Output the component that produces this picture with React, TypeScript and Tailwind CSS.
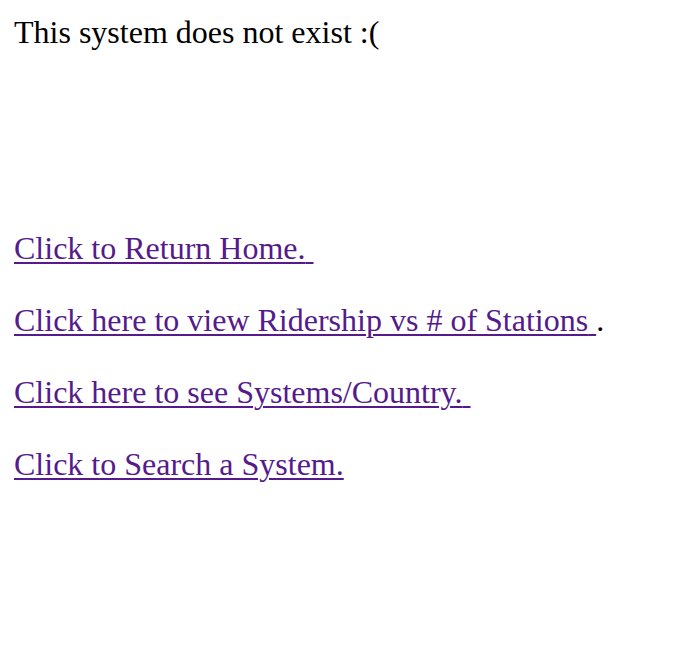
export default function App() {
  const link = "text-[#551A8B] underline decoration-[#551A8B] decoration-[2px] underline-offset-[3px]";
  return (
    <div className="min-h-[650px] bg-white p-[14px] text-black font-['Liberation_Serif','Times_New_Roman',serif] text-[32px] leading-[36px]">
      <div>This system does not exist :(</div>
      <div className="mt-[180px] flex flex-col gap-[36px]">
        <div>
          <a href="#" className={link}>Click to Return Home.{"\u00a0"}</a>
        </div>
        <div>
          <a href="#" className={link}>Click here to view Ridership vs # of Stations{"\u00a0"}</a>.
        </div>
        <div>
          <a href="#" className={link}>Click here to see Systems/Country.{"\u00a0"}</a>
        </div>
        <div>
          <a href="#" className={link}>Click to Search a System.</a>
        </div>
      </div>
    </div>
  );
}
